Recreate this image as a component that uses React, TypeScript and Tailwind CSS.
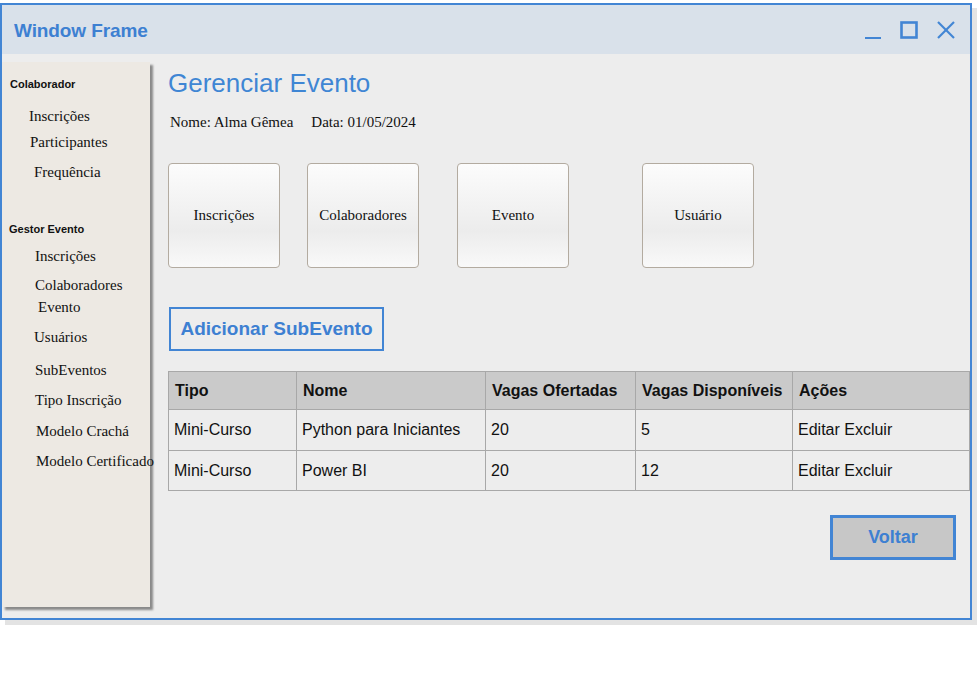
import React from "react";

const serif = { fontFamily: '"Liberation Serif", "Times New Roman", serif' };

function SideItem({ label, ml, mt }: { label: string; ml: string; mt: string }) {
  return (
    <div className={`${ml} ${mt} text-[15px] leading-[16px] text-[#111] whitespace-nowrap`} style={serif}>
      {label}
    </div>
  );
}

function Tile({ label, cls }: { label: string; cls: string }) {
  return (
    <div
      className={`${cls} w-[112px] h-[105px] rounded-[4px] border border-[#b3aba0] bg-[linear-gradient(to_bottom,#fcfcfc,#ececec_65%,#f9f9f9)] flex items-center justify-center text-[15px] text-[#111]`}
      style={serif}
    >
      {label}
    </div>
  );
}

export default function App() {
  const rows = [
    ["Mini-Curso", "Python para Iniciantes", "20", "5", "Editar Excluir"],
    ["Mini-Curso", "Power BI", "20", "12", "Editar Excluir"],
  ];
  return (
    <div className="w-[980px] h-[683px] bg-white pt-[3px]" style={{ fontFamily: '"Liberation Sans", Arial, sans-serif' }}>
      <div className="w-[972px] h-[617px] border-2 border-[#4285d4] bg-[#ededed] shadow-[5px_5px_0_#e3e3e3] flex flex-col">
        {/* title bar */}
        <div className="h-[49px] shrink-0 bg-[#d9e1ea] flex items-center pl-[12px] pr-[14px]">
          <div className="mt-[3px] text-[19px] font-bold text-[#3d80d2] tracking-[-0.1px]">Window Frame</div>
          <div className="ml-auto flex items-center gap-[18px]">
            <svg width="18" height="18" viewBox="0 0 18 18" className="mt-[2px]">
              <line x1="1" y1="16" x2="17" y2="16" stroke="#4285d4" strokeWidth="2" />
            </svg>
            <svg width="18" height="18" viewBox="0 0 18 18">
              <rect x="1.5" y="1.5" width="15" height="15" fill="none" stroke="#4285d4" strokeWidth="2.6" />
            </svg>
            <svg width="20" height="18" viewBox="0 0 20 18">
              <line x1="2" y1="1" x2="18" y2="17" stroke="#4285d4" strokeWidth="2.2" />
              <line x1="18" y1="1" x2="2" y2="17" stroke="#4285d4" strokeWidth="2.2" />
            </svg>
          </div>
        </div>
        {/* body */}
        <div className="flex flex-1 min-h-0">
          {/* sidebar */}
          <div className="w-[148px] h-[545px] mt-[8px] shrink-0 bg-[#ede9e3] shadow-[3px_3px_2px_#8a8a8a] flex flex-col">
            <div className="ml-[8px] mt-[15px] text-[11px] leading-[14px] font-bold text-[#111]">Colaborador</div>
            <SideItem label="Inscrições" ml="ml-[27px]" mt="mt-[17px]" />
            <SideItem label="Participantes" ml="ml-[28px]" mt="mt-[10px]" />
            <SideItem label="Frequência" ml="ml-[32px]" mt="mt-[14px]" />
            <div className="ml-[7px] mt-[42px] text-[11px] leading-[14px] font-bold text-[#111]">Gestor Evento</div>
            <SideItem label="Inscrições" ml="ml-[33px]" mt="mt-[12px]" />
            <SideItem label="Colaboradores" ml="ml-[33px]" mt="mt-[13px]" />
            <SideItem label="Evento" ml="ml-[36px]" mt="mt-[6px]" />
            <SideItem label="Usuários" ml="ml-[32px]" mt="mt-[14px]" />
            <SideItem label="SubEventos" ml="ml-[33px]" mt="mt-[17px]" />
            <SideItem label="Tipo Inscrição" ml="ml-[33px]" mt="mt-[14px]" />
            <SideItem label="Modelo Crachá" ml="ml-[34px]" mt="mt-[15px]" />
            <SideItem label="Modelo Certificado" ml="ml-[34px]" mt="mt-[14px]" />
          </div>
          {/* content */}
          <div className="flex-1 min-w-0 pl-[18px] flex flex-col">
            <div className="mt-[14px] text-[26px] leading-[30px] text-[#3f86d4]">Gerenciar Evento</div>
            <div className="mt-[16px] ml-[2px] flex text-[15px] leading-[16px] text-[#111]" style={serif}>
              <span>Nome: Alma Gêmea</span>
              <span className="ml-[18px]">Data: 01/05/2024</span>
            </div>
            <div className="mt-[33px] flex">
              <Tile label="Inscrições" cls="" />
              <Tile label="Colaboradores" cls="ml-[27px]" />
              <Tile label="Evento" cls="ml-[38px]" />
              <Tile label="Usuário" cls="ml-[73px]" />
            </div>
            <div className="mt-[39px] ml-[1px] w-[215px] h-[44px] border-2 border-[#4285d4] flex items-center justify-center text-[19px] font-bold text-[#3d80d2]">
              Adicionar SubEvento
            </div>
            <table className="mt-[20px] border-collapse table-fixed w-[801px] text-[16px] text-[#111]">
              <colgroup>
                <col className="w-[128px]" />
                <col className="w-[189px]" />
                <col className="w-[150px]" />
                <col className="w-[157px]" />
                <col className="w-[177px]" />
              </colgroup>
              <thead>
                <tr className="h-[38px] bg-[#cacaca]">
                  {["Tipo", "Nome", "Vagas Ofertadas", "Vagas Disponíveis", "Ações"].map((h) => (
                    <th key={h} className="border border-[#a8a8a8] text-left font-bold px-[6px] whitespace-nowrap">
                      {h}
                    </th>
                  ))}
                </tr>
              </thead>
              <tbody>
                {rows.map((r, i) => (
                  <tr key={i} className={i === 0 ? "h-[41px]" : "h-[40px]"}>
                    {r.map((c, j) => (
                      <td key={j} className="border border-[#a8a8a8] px-[5px] whitespace-nowrap">
                        {c}
                      </td>
                    ))}
                  </tr>
                ))}
              </tbody>
            </table>
            <div className="mt-[24px] ml-[662px] w-[126px] h-[45px] border-[3px] border-[#4285d4] bg-[#c7c7c7] flex items-center justify-center text-[18px] font-bold text-[#3d80d2]">
              Voltar
            </div>
          </div>
        </div>
      </div>
    </div>
  );
}
